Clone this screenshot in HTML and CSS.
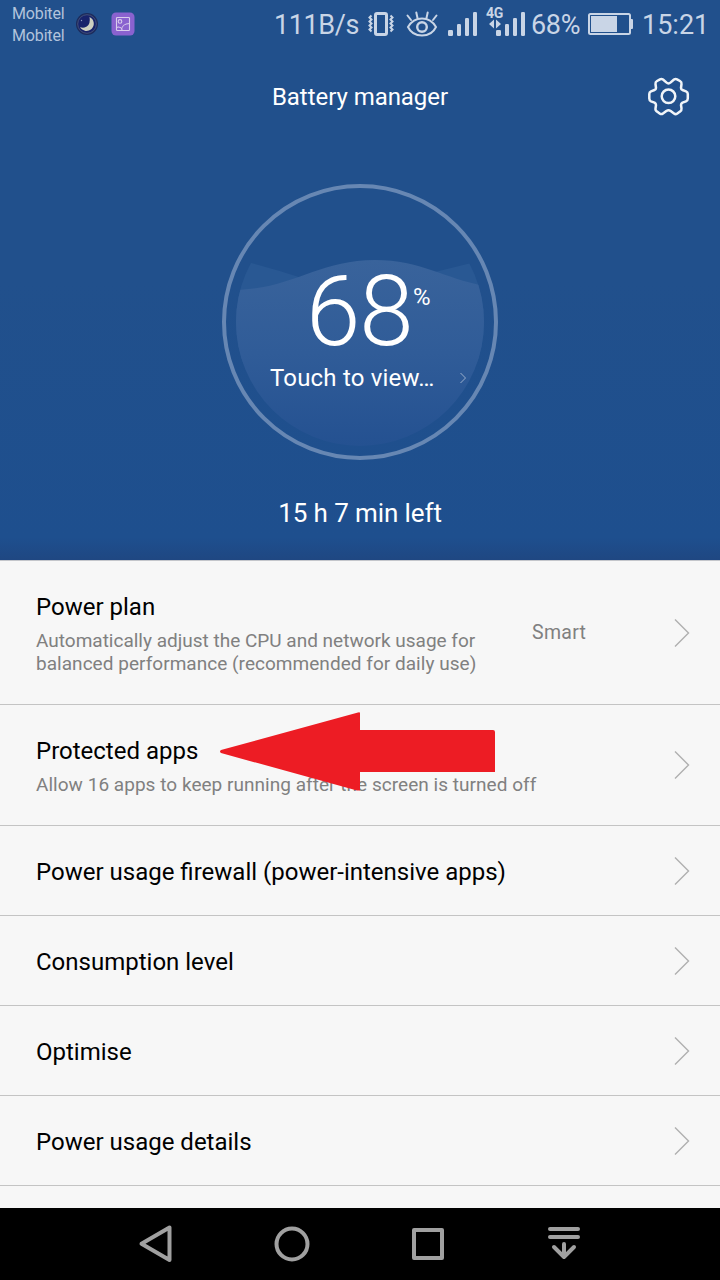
FILE: index.html
```html
<!DOCTYPE html>
<html lang="en">
<head>
<meta charset="utf-8">
<title>Battery manager</title>
<link rel="stylesheet" href="styles.css">
</head>
<body>
<div class="phone">
  <section class="hero">
    <div class="status">
      <div class="carriers"><span>Mobitel</span><span>Mobitel</span></div>
      <svg class="moon" width="22" height="22" viewBox="0 0 22 22"><circle cx="11" cy="11" r="11" fill="#1c2b5c"/><circle cx="11" cy="11" r="9.3" fill="#17236b" stroke="#4d5a80" stroke-width=".8"/><path d="M13.500 4A7.300 7.300 0 1 1 4 14Q6 15 8.500 14.500Q15 13 13.500 4Z" fill="#cdd0c0"/><circle cx="5.500" cy="7.500" r=".7" fill="#8d9bc0"/></svg>
      <svg class="photo" width="24" height="24" viewBox="0 0 24 24"><rect x=".5" y=".5" width="23" height="23" rx="4.500" fill="#8a62cf"/><g fill="none" stroke="#d8cdec" stroke-width="1.100"><rect x="5.500" y="5.500" width="13" height="13" rx=".8"/><circle cx="9" cy="9.400" r="1.800"/><path d="M10.500 18.500C10.500 14 14 11.500 18.500 11.500M5.500 15.500Q9 14 11.500 17.500"/></g></svg>
      <span class="speed">111B/s</span>
      <svg class="vibrate" width="26" height="26" viewBox="0 0 26 26" fill="none" stroke="#c9d5e6"><rect x="7.500" y="2.500" width="11" height="21" rx="1.500" stroke-width="3"/><path d="M3.500 4.500l-2 2 2 2-2 2 2 2-2 2 2 2-2 2 2 2M22.500 4.500l2 2-2 2 2 2-2 2 2 2-2 2 2 2-2 2" stroke-width="2"/></svg>
      <svg class="eye" width="32" height="26" viewBox="0 0 32 26" fill="none" stroke="#c9d5e6" stroke-width="2" stroke-linecap="round"><path d="M2 16Q7 7.500 16 7.500T30 16Q26 24.500 16 24.500T2 16Z"/><circle cx="16" cy="16" r="4.800" stroke-width="2.400"/><path d="M5 9L1.500 4.500M11.500 7L10.300 1.500M20.500 7L21.700 1.500M27 9L30.500 4.500"/></svg>
      <svg class="signal" width="30" height="26" viewBox="0 0 30 26" fill="#c9d5e6"><rect x="0" y="18" width="5" height="6" rx="1.200"/><rect x="9" y="12" width="4" height="12" rx="1.200"/><rect x="17" y="6" width="4" height="18" rx="1.200"/><rect x="25" y="0" width="4" height="24" rx="1.200"/></svg>
      <div class="cell">
        <span>4G</span>
        <svg width="39" height="26" viewBox="0 0 39 26" fill="#c9d5e6"><path d="M2 12l5-4.500v9zM14 12L9 7.500v9z"/><rect x="9" y="18" width="5" height="6" rx="1.200"/><rect x="18" y="12" width="4" height="12" rx="1.200"/><rect x="26" y="6" width="4" height="18" rx="1.200"/><rect x="34" y="0" width="4" height="24" rx="1.200"/></svg>
      </div>
      <span class="percent">68%</span>
      <svg class="battery" width="45" height="22" viewBox="0 0 45 22"><rect x="1" y="1" width="41" height="20" rx="1.500" fill="none" stroke="#c9d5e6" stroke-width="2"/><rect x="3" y="3" width="26" height="16" fill="#c9d5e6"/><path d="M42 6h2q1 0 1 1v8q0 1-1 1h-2z" fill="#c9d5e6"/></svg>
      <span class="clock">15:21</span>
    </div>
    <header class="header">
      <h1>Battery manager</h1>
      <svg class="gear" width="42" height="40" viewBox="0 0 42 40" fill="none" stroke="#f0f4f8" stroke-width="2.500" stroke-linejoin="round"><path d="M20.500 6.400Q21.500 6.400 22.700 5.400L26 2.500Q27.500 1.500 29 2.300L32 4Q33.800 5 33.500 7L33 11Q33 12.500 34.500 13L38 14.400Q39.800 15.200 39.800 17V21.500Q39.800 23.600 38 24.300L34.500 25.600Q33 26.500 33 28L33.500 31.500Q33.800 33.600 32 34.600L29 36.700Q27.500 37.600 26 36.500L22.700 34Q20.500 32.500 18.300 34L15 36.500Q13.500 37.600 12 36.700L9 34.600Q7.200 33.600 7.500 31.500L8 28Q8 26.500 6.500 25.600L3 24.300Q1.300 23.600 1.300 21.500V17Q1.300 15.200 3 14.400L6.500 13Q8 12.500 8 11L7.500 7Q7.200 5 9 4L12 2.300Q13.500 1.500 15 2.500L18.300 5.400Q19.500 6.400 20.500 6.400Z"/><circle cx="20.500" cy="19.300" r="6.800"/></svg>
    </header>
    <div class="gauge">
      <svg class="dial" width="276" height="276" viewBox="0 0 276 276">
        <defs>
          <clipPath id="tank"><circle cx="138" cy="138" r="124"/></clipPath>
          <linearGradient id="water" x1="0" y1="76" x2="0" y2="262" gradientUnits="userSpaceOnUse"><stop offset="0" stop-color="#39639b"/><stop offset=".5" stop-color="#305c98"/><stop offset="1" stop-color="#245191"/></linearGradient>
        </defs>
        <g clip-path="url(#tank)">
          <path d="M14 75Q50 84 80 94H190Q220 86 262 76V180H14Z" fill="#295893"/>
          <path d="M10 106C70 106 95 76 153 76C202 76 225 97 270 103V276H10Z" fill="url(#water)"/>
        </g>
        <circle cx="138" cy="138" r="136" fill="none" stroke="#6787b3" stroke-width="4"/>
      </svg>
      <div class="level"><span class="number">68</span><span class="unit">%</span></div>
      <div class="touch"><span>Touch to view…</span><svg width="8" height="12" viewBox="0 0 8 12" fill="none" stroke="#9bb0cd"><path d="M1.500 1L6.500 6L1.500 11"/></svg></div>
    </div>
    <p class="left">15 h 7 min left</p>
  </section>
  <main class="list">
    <div class="row plan">
      <div class="body"><h2>Power plan</h2><p>Automatically adjust the CPU and network usage for<br><span class="second">balanced performance (recommended for daily use)</span></p></div>
      <span class="value">Smart</span>
      <svg class="chev" width="16" height="30" viewBox="0 0 16 30"><path d="M1 1.500L14.500 15L1 28.500"/></svg>
    </div>
    <div class="row apps">
      <div class="body"><h2>Protected apps</h2><p class="second">Allow 16 apps to keep running after the screen is turned off</p></div>
      <svg class="chev" width="16" height="30" viewBox="0 0 16 30"><path d="M1 1.500L14.500 15L1 28.500"/></svg>
      <svg class="arrow" width="276" height="80" viewBox="0 0 276 80"><path d="M1 38L138 0.500Q140 0 140 1V18H273Q275 18 275 20V60H140V78.500H137L1 41Q-1 39.500 1 38Z" fill="#ed1c24"/></svg>
    </div>
    <div class="row"><h2>Power usage firewall (power-intensive apps)</h2><svg class="chev" width="16" height="30" viewBox="0 0 16 30"><path d="M1 1.500L14.500 15L1 28.500"/></svg></div>
    <div class="row"><h2>Consumption level</h2><svg class="chev" width="16" height="30" viewBox="0 0 16 30"><path d="M1 1.500L14.500 15L1 28.500"/></svg></div>
    <div class="row"><h2>Optimise</h2><svg class="chev" width="16" height="30" viewBox="0 0 16 30"><path d="M1 1.500L14.500 15L1 28.500"/></svg></div>
    <div class="row"><h2>Power usage details</h2><svg class="chev" width="16" height="30" viewBox="0 0 16 30"><path d="M1 1.500L14.500 15L1 28.500"/></svg></div>
  </main>
  <nav class="nav">
    <svg width="36" height="40" viewBox="0 0 36 40"><path d="M31.500 3.500V36L3.500 19.700Z"/></svg>
    <svg width="36" height="40" viewBox="0 0 36 40"><circle cx="18" cy="20" r="15.500"/></svg>
    <svg width="36" height="40" viewBox="0 0 36 40"><rect x="4" y="6" width="28" height="28"/></svg>
    <svg width="36" height="40" viewBox="0 0 36 40"><path d="M4 5H32M4 13H32M18 20V33M8 23L18 33L28 23"/></svg>
  </nav>
</div>
</body>
</html>
```

FILE: styles.css
```css
* { box-sizing: border-box; }
body { margin: 0; font-family: Roboto, "Liberation Sans", sans-serif; }
h1, h2, p { margin: 0; font-weight: 400; }
svg { display: block; flex: none; }
.phone { width: 720px; height: 1280px; display: flex; flex-direction: column; background: #f7f7f7; overflow: hidden; }
.hero { height: 560px; flex: none; color: #fff; background: linear-gradient(#21508c, #21508c 50%, #1e4f8e 96%, #1f4782); }

.status { height: 50px; display: flex; align-items: flex-start; color: #c9d5e6; white-space: nowrap; }
.carriers { width: 65px; padding: 3px 0 0 12px; display: flex; flex-direction: column; font-size: 16px; line-height: 22px; letter-spacing: -.15px; color: #b2c4dc; }
.moon { margin: 13px 0 0 11px; }
.photo { margin: 12px 0 0 13px; }
.speed, .percent, .clock { font-size: 27px; line-height: 32px; margin-top: 9px; }
.speed { width: 86px; margin-left: 139px; letter-spacing: -.4px; }
.vibrate { margin: 11px 0 0 8px; }
.eye { margin: 11px 0 0 12px; }
.signal { margin: 12px 0 0 10px; }
.cell { position: relative; margin: 12px 0 0 9px; }
.cell span { position: absolute; left: -1px; top: -6px; font-size: 14px; line-height: 14px; font-weight: 700; letter-spacing: -.3px; }
.percent { width: 49px; margin-left: 5px; letter-spacing: -.3px; }
.battery { margin: 13px 0 0 8px; }
.clock { margin-left: 9px; }

.header { height: 92px; padding: 1px 30px 0 72px; display: flex; align-items: center; }
.header h1 { flex: 1; padding-top: 1px; text-align: center; font-size: 24px; line-height: 30px; letter-spacing: -.05px; }
.gauge { position: relative; width: 276px; height: 276px; margin: 42px auto 0; padding-top: 78px; }
.dial { position: absolute; inset: 0; }
.level { position: relative; display: flex; align-items: flex-start; padding-left: 84px; }
.number { font-size: 98px; line-height: 100px; font-weight: 300; width: 107px; letter-spacing: -1px; }
.unit { font-size: 24px; line-height: 28px; margin-top: 21px; }
.touch { position: relative; display: flex; align-items: center; justify-content: space-between; padding: 0 31px 0 48px; margin-top: 1px; font-size: 24px; line-height: 30px; letter-spacing: .18px; white-space: nowrap; }
.left { text-align: center; font-size: 26px; line-height: 32px; letter-spacing: -.1px; margin-top: 37px; }

.list { height: 648px; flex: none; border-top: 1px solid #c4c6cb; }
.row { position: relative; height: 90px; padding: 0 30px 0 36px; display: flex; align-items: center; justify-content: space-between; border-bottom: 1px solid #c4c4c4; white-space: nowrap; }
.plan { height: 144px; }
.apps { height: 121px; }
.body { flex: 1; }
.row h2 { font-size: 24px; line-height: 32px; color: #000; padding-top: 3px; }
.row .body h2 { padding-top: 0; }
.row p { font-size: 19px; line-height: 23px; color: #808080; margin-top: 6px; }
.second { letter-spacing: .035px; }
.value { width: 142px; font-size: 19.5px; line-height: 23px; letter-spacing: .3px; color: #808080; }
.chev { fill: none; stroke: #b0b0b0; stroke-width: 1.4; }
.arrow { position: absolute; left: 220px; top: 7px; }

.nav { height: 72px; flex: none; display: flex; justify-content: center; gap: 100px; padding-top: 16px; background: #000; }
.nav svg { fill: none; stroke: #a0a0a0; stroke-width: 4; stroke-linecap: round; stroke-linejoin: round; }
```
